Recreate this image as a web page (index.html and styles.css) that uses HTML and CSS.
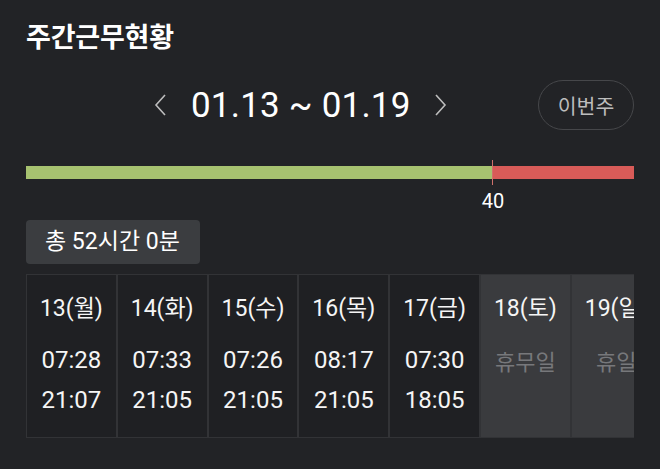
FILE: index.html
```html
<!DOCTYPE html>
<html lang="ko">
<head>
<meta charset="utf-8">
<link rel="stylesheet" href="styles.css">
</head>
<body>
<div class="page">
  <h1 class="title">주간근무현황</h1>
  <div class="nav-row">
    <div class="nav">
      <svg class="chev" width="14" height="22" viewBox="0 0 14 22"><path d="M11 1 L2 11 L11 21" fill="none" stroke="#bdbdbd" stroke-width="1.6"/></svg>
      <span class="range">01.13 ~ 01.19</span>
      <svg class="chev" width="14" height="22" viewBox="0 0 14 22"><path d="M3 1 L12 11 L3 21" fill="none" stroke="#bdbdbd" stroke-width="1.6"/></svg>
    </div>
    <button class="this-week">이번주</button>
  </div>
  <div class="bar-wrap">
    <div class="bar">
      <div class="bar-green"></div>
      <div class="bar-red"></div>
    </div>
    <div class="marker"></div>
    <div class="marker-label">40</div>
  </div>
  <div class="total">총 52시간 0분</div>
  <div class="grid-clip">
    <div class="grid">
      <div class="cell"><div class="day">13(월)</div><div class="time">07:28</div><div class="time">21:07</div></div>
      <div class="cell"><div class="day">14(화)</div><div class="time">07:33</div><div class="time">21:05</div></div>
      <div class="cell"><div class="day">15(수)</div><div class="time">07:26</div><div class="time">21:05</div></div>
      <div class="cell"><div class="day">16(목)</div><div class="time">08:17</div><div class="time">21:05</div></div>
      <div class="cell"><div class="day">17(금)</div><div class="time">07:30</div><div class="time">18:05</div></div>
      <div class="cell off"><div class="day">18(토)</div><div class="time off-text">휴무일</div></div>
      <div class="cell off"><div class="day">19(일)</div><div class="time off-text">휴일</div></div>
    </div>
  </div>
</div>
</body>
</html>
```
FILE: styles.css
```css
html, body {
  margin: 0;
  padding: 0;
  background: #222326;
}
body {
  width: 660px;
  height: 469px;
  overflow: hidden;
  font-family: Roboto, "Noto Sans CJK KR", sans-serif;
  color: #f2f2f2;
}
.page {
  padding: 0 26px;
}
.title {
  margin: 0;
  padding-top: 17px;
  height: 38px;
  font-family: "Noto Sans CJK KR", sans-serif;
  font-weight: 700;
  font-size: 27px;
  line-height: 38px;
  color: #ffffff;
  letter-spacing: -0.2px;
}
.nav-row {
  display: flex;
  align-items: center;
  justify-content: space-between;
  margin-top: 25px;
  height: 50px;
}
.nav {
  display: flex;
  align-items: center;
  margin-left: 128px;
}
.chev {
  display: block;
}
.range {
  font-family: Roboto, sans-serif;
  font-size: 35px;
  color: #ffffff;
  margin: 0 22px 0 23px;
  letter-spacing: 0.2px;
}
.this-week {
  width: 96px;
  height: 50px;
  border: 1.5px solid #46474a;
  border-radius: 25px;
  background: transparent;
  color: #bdbdbd;
  font-family: "Noto Sans CJK KR", sans-serif;
  font-size: 20.5px;
  padding: 0;
}
.bar-wrap {
  position: relative;
  margin-top: 36px;
  height: 40px;
}
.bar {
  display: flex;
  height: 13px;
}
.bar-green {
  width: 467px;
  background: #a7c270;
}
.bar-red {
  flex: 1;
  background: #d85b58;
}
.marker {
  position: absolute;
  left: 466px;
  top: -6px;
  width: 1px;
  height: 25px;
  background: #d0716b;
}
.marker-label {
  position: absolute;
  left: 447px;
  width: 40px;
  top: 24px;
  text-align: center;
  font-size: 20px;
  line-height: 22px;
  color: #ffffff;
}
.total {
  margin-top: 14px;
  width: 174px;
  height: 44px;
  box-sizing: border-box;
  padding-left: 19px;
  background: #3b3d40;
  border-radius: 4px;
  font-family: Roboto, "Noto Sans CJK KR", sans-serif;
  font-size: 23px;
  line-height: 44px;
  color: #ffffff;
}
.grid-clip {
  margin-top: 10px;
  width: 608px;
  overflow: hidden;
}
.grid {
  display: grid;
  grid-template-columns: repeat(7, 88.8px);
  gap: 2px;
  padding: 1px;
  width: max-content;
  background: #323336;
}
.cell {
  height: 162px;
  background: #1f2023;
  display: flex;
  flex-direction: column;
  align-items: center;
}
.cell.off {
  background: #3a3b3e;
}
.day {
  margin-top: 19px;
  font-size: 23px;
  line-height: 30px;
  color: #f5f5f5;
  white-space: nowrap;
}
.time {
  font-size: 24px;
  line-height: 40px;
  color: #f5f5f5;
}
.day + .time {
  margin-top: 16px;
}
.off-text {
  font-family: "Noto Sans CJK KR", sans-serif;
  font-size: 22px;
  color: #77787b;
}
```
